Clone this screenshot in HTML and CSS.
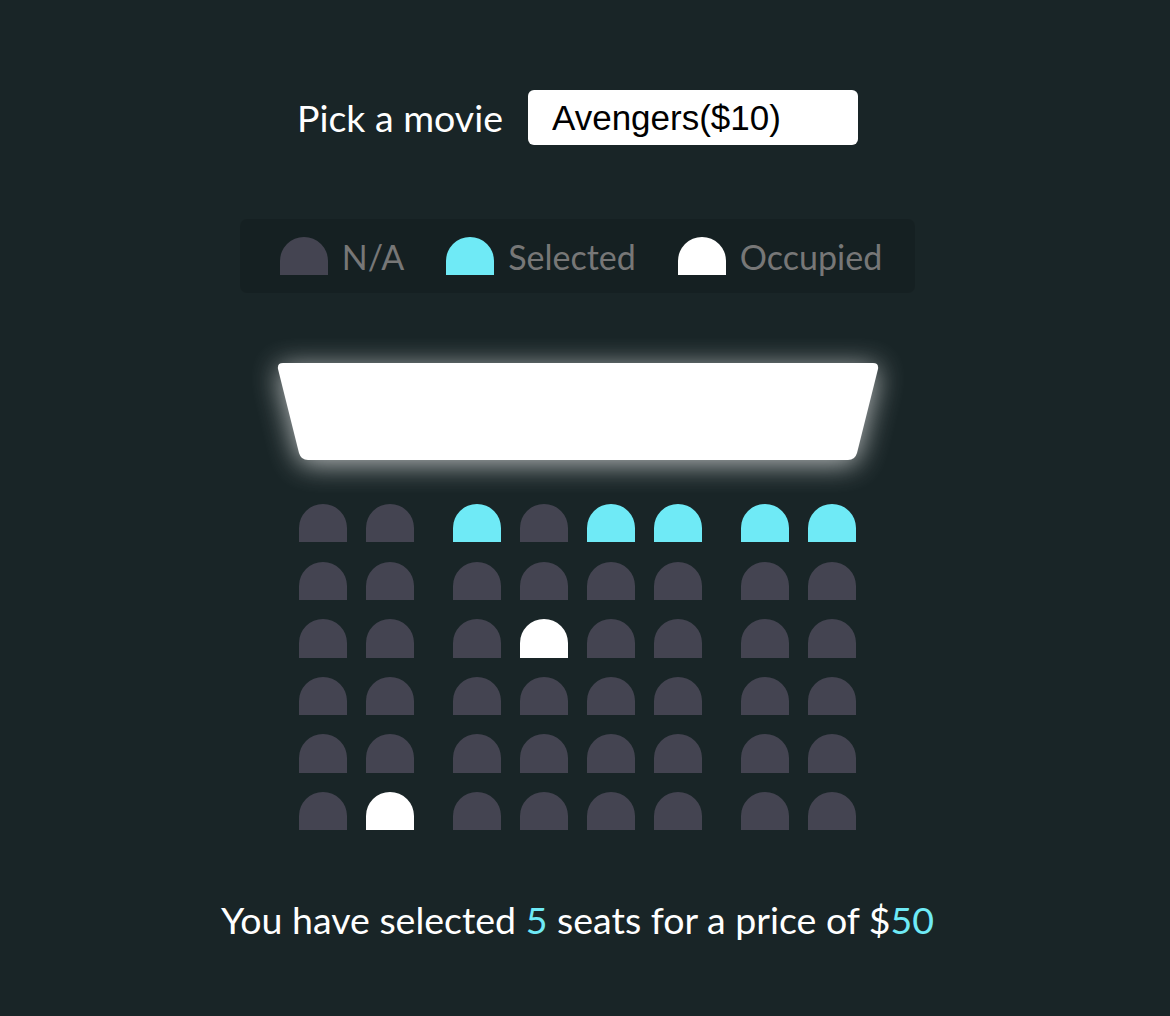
FILE: index.html
```html
<!DOCTYPE html>
<html lang="en">
<head>
<meta charset="utf-8">
<title>Movie Seat Booking</title>
<link rel="stylesheet" href="styles.css">
</head>
<body>
<main class="page">
  <div class="movie-container">
    <label class="movie-label" for="movie">Pick a movie</label>
    <select id="movie" class="movie-select">
      <option value="10">Avengers($10)</option>
      <option value="12">Joker($12)</option>
      <option value="8">Toy Story 4($8)</option>
      <option value="9">The Lion King($9)</option>
    </select>
  </div>

  <ul class="showcase">
    <li class="showcase-item"><div class="seat"></div><small>N/A</small></li>
    <li class="showcase-item"><div class="seat selected"></div><small>Selected</small></li>
    <li class="showcase-item"><div class="seat occupied"></div><small>Occupied</small></li>
  </ul>

  <div class="theater">
    <svg class="screen" width="602" height="97" viewBox="0 0 602 97" aria-hidden="true">
      <path d="M6 0 H596 Q602 0 601 6 L580 90 Q578 97 571 97 H31 Q24 97 22 90 L1 6 Q0 0 6 0 Z" fill="#ffffff"/>
    </svg>

    <div class="seats">
      <div class="row">
        <div class="seat"></div><div class="seat"></div><div class="seat selected"></div><div class="seat"></div>
        <div class="seat selected"></div><div class="seat selected"></div><div class="seat selected"></div><div class="seat selected"></div>
      </div>
      <div class="row">
        <div class="seat"></div><div class="seat"></div><div class="seat"></div><div class="seat"></div>
        <div class="seat"></div><div class="seat"></div><div class="seat"></div><div class="seat"></div>
      </div>
      <div class="row">
        <div class="seat"></div><div class="seat"></div><div class="seat"></div><div class="seat occupied"></div>
        <div class="seat"></div><div class="seat"></div><div class="seat"></div><div class="seat"></div>
      </div>
      <div class="row">
        <div class="seat"></div><div class="seat"></div><div class="seat"></div><div class="seat"></div>
        <div class="seat"></div><div class="seat"></div><div class="seat"></div><div class="seat"></div>
      </div>
      <div class="row">
        <div class="seat"></div><div class="seat"></div><div class="seat"></div><div class="seat"></div>
        <div class="seat"></div><div class="seat"></div><div class="seat"></div><div class="seat"></div>
      </div>
      <div class="row">
        <div class="seat"></div><div class="seat occupied"></div><div class="seat"></div><div class="seat"></div>
        <div class="seat"></div><div class="seat"></div><div class="seat"></div><div class="seat"></div>
      </div>
    </div>
  </div>

  <p class="text">You have selected <span class="count">5</span> seats for a price of $<span class="total">50</span></p>
</main>
</body>
</html>
```

FILE: styles.css
```css
* {
  box-sizing: border-box;
}

html, body {
  margin: 0;
  padding: 0;
  height: 100%;
}

body {
  background-color: #192527;
  color: #ffffff;
  font-family: Lato, "Noto Sans", sans-serif;
}

.page {
  display: flex;
  flex-direction: column;
  align-items: center;
  width: 1155px;
  padding-top: 90px;
}

.movie-container {
  display: flex;
  align-items: center;
  height: 55px;
  margin-bottom: 74px;
}

.movie-label {
  font-size: 37.5px;
  color: #ffffff;
}

.movie-select {
  appearance: none;
  -webkit-appearance: none;
  background: #ffffff;
  border: 0;
  border-radius: 6px;
  width: 330px;
  height: 55px;
  margin-left: 25px;
  padding: 0 24px;
  font-family: "Liberation Sans", Arial, sans-serif;
  font-size: 35px;
  color: #000000;
}

.showcase {
  display: flex;
  align-items: center;
  gap: 42px;
  height: 74px;
  margin: 0 0 70px;
  padding: 0 33px 0 40px;
  list-style: none;
  background: rgba(0, 0, 0, 0.12);
  border-radius: 7px;
  color: #777777;
}

.showcase-item {
  display: flex;
  align-items: center;
}

.showcase-item small {
  font-size: 34px;
  margin-left: 14px;
}

.seat {
  width: 48px;
  height: 38.4px;
  background-color: #444451;
  border-radius: 24px 24px 0 0;
}

.seat.selected {
  background-color: #6feaf6;
}

.seat.occupied {
  background-color: #ffffff;
}

.theater {
  display: flex;
  flex-direction: column;
  align-items: center;
}

.screen {
  display: block;
  overflow: visible;
  filter: drop-shadow(0 4px 14px rgba(255, 255, 255, 0.7));
  margin-bottom: 44px;
}

.seats {
  display: flex;
  flex-direction: column;
  gap: 19.2px;
}

.row {
  display: flex;
  gap: 19.2px;
}

.row .seat:nth-child(2) {
  margin-right: 19.2px;
}

.row .seat:nth-last-child(2) {
  margin-left: 19.2px;
}

.text {
  margin: 68px 0 0;
  font-size: 37.5px;
  line-height: 44px;
}

.text span {
  color: #6feaf6;
}
```
